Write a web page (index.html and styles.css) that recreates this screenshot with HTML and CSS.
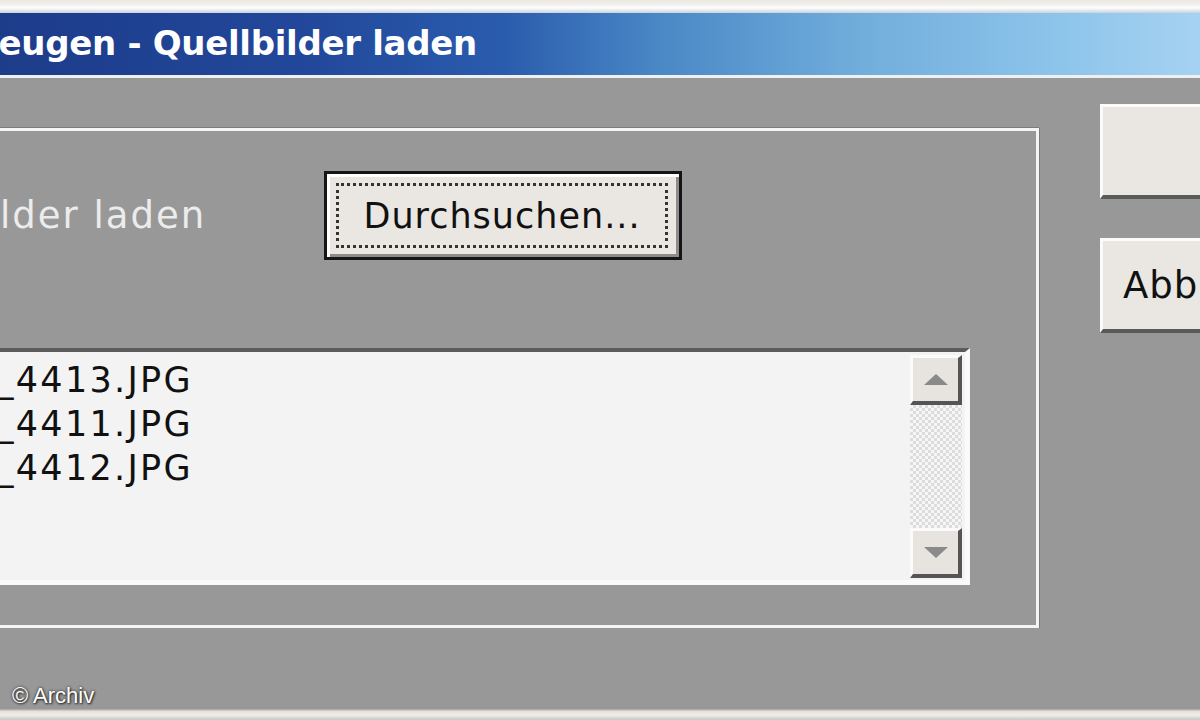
FILE: index.html
```html
<!DOCTYPE html>
<html lang="de">
<head>
  <meta charset="UTF-8">
  <title>Quellbilder laden</title>
  <link rel="stylesheet" href="styles.css">
</head>
<body>
  <div class="frame-top"></div>
  <div class="titlebar">
    <span class="title">zeugen - Quellbilder laden</span>
  </div>
  <div class="client">
    <div class="main-col">
      <div class="groupbox">
        <div class="browse-row">
          <span class="label">lder laden</span>
          <button class="btn btn-default"><span class="focus">Durchsuchen...</span></button>
        </div>
        <div class="listbox">
          <ul class="files">
            <li>_4413.JPG</li>
            <li>_4411.JPG</li>
            <li>_4412.JPG</li>
          </ul>
          <div class="scrollbar">
            <div class="scroll-btn"><span class="arrow-up"></span></div>
            <div class="scroll-track"></div>
            <div class="scroll-btn"><span class="arrow-down"></span></div>
          </div>
        </div>
      </div>
    </div>
    <div class="side-col">
      <button class="btn btn-side"></button>
      <button class="btn btn-side">Abb</button>
    </div>
  </div>
  <div class="frame-bottom"></div>
  <div class="credit">© Archiv</div>
</body>
</html>
```

FILE: styles.css
```css
body {
  margin: 0;
  width: 1200px;
  height: 720px;
  overflow: hidden;
  position: relative;
  background-color: #989898;
  font-family: "DejaVu Sans", Verdana, sans-serif;
  color: #111;
}
.frame-top {
  height: 13px;
  background: linear-gradient(#ece8e2 0, #f2f0ec 35%, #ffffff 60%, #c9d2dc 100%);
}
.titlebar {
  height: 62px;
  border-bottom: 3px solid #eef0f2;
  background: linear-gradient(to right, #1d3c8a 0, #22479a 25%, #2a5cad 42%, #4a88c6 55%, #72aedc 72%, #8cc4ea 88%, #a6d2f2 100%);
  overflow: hidden;
  white-space: nowrap;
}
.title {
  display: inline-block;
  margin-left: -21px;
  line-height: 60px;
  font-size: 34px;
  font-weight: bold;
  color: #fff;
  letter-spacing: -0.3px;
}
.client {
  display: flex;
  height: 630px;
}
.main-col {
  padding-top: 50px;
  margin-left: -20px;
}
.groupbox {
  width: 1059px;
  box-sizing: border-box;
  border: 3px solid #f4f4f4;
  box-shadow: 0 -1px 0 #7c7c7c, 1px 0 0 #7c7c7c;
  padding: 40px 66px 40px 17px;
}
.browse-row {
  display: flex;
  align-items: center;
}
.label {
  flex: 0 0 324px;
  font-size: 37px;
  letter-spacing: 2px;
  color: #ececec;
}
.btn {
  font-family: inherit;
  color: #111;
  background-color: #eae6e2;
  padding: 0;
  cursor: pointer;
}
.btn-default {
  width: 358px;
  height: 89px;
  border: 3px solid #151515;
  box-shadow: inset 3px 3px 0 #fff, inset -3px -3px 0 #8c8c8c;
  padding: 9px 11px 9px 9px;
}
.focus {
  display: flex;
  align-items: center;
  justify-content: center;
  height: 100%;
  border: 3px dotted #333;
  box-sizing: border-box;
  font-size: 35px;
  letter-spacing: 1px;
}
.listbox {
  display: flex;
  margin-top: 88px;
  height: 237px;
  box-sizing: border-box;
  border-top: 4px solid #5c5c5c;
  border-right: 5px solid #fafafa;
  border-bottom: 5px solid #fafafa;
  background-color: #f3f3f3;
  padding: 3px 3px 2px 0;
}
.files {
  flex: 1;
  list-style: none;
  margin: 0 0 0 -4px;
  padding: 3px 0 0 0;
  font-size: 35px;
  line-height: 44px;
  letter-spacing: 2.3px;
}
.scrollbar {
  width: 52px;
  display: flex;
  flex-direction: column;
}
.scroll-btn {
  height: 50px;
  box-sizing: border-box;
  background-color: #e7e4e0;
  border-top: 3px solid #fbfbfb;
  border-left: 3px solid #fbfbfb;
  border-right: 4px solid #555;
  border-bottom: 4px solid #555;
  display: flex;
  align-items: center;
  justify-content: center;
}
.scroll-track {
  flex: 1;
  background: repeating-conic-gradient(#dcdcdc 0 25%, #f6f6f6 0 50%) 0 0 / 6px 6px;
}
.arrow-up {
  border-left: 12px solid transparent;
  border-right: 12px solid transparent;
  border-bottom: 11px solid #8a8a8a;
}
.arrow-down {
  border-left: 12px solid transparent;
  border-right: 12px solid transparent;
  border-top: 11px solid #8a8a8a;
}
.side-col {
  display: flex;
  flex-direction: column;
  gap: 39px;
  padding-top: 26px;
  margin-left: 61px;
}
.btn-side {
  width: 100px;
  height: 95px;
  border-top: 3px solid #fbfbfb;
  border-left: 3px solid #fbfbfb;
  border-right: none;
  border-bottom: 4px solid #5a5a5a;
  padding-left: 20px;
  text-align: left;
  font-size: 37px;
  letter-spacing: 1px;
}
.frame-bottom {
  height: 12px;
  background: linear-gradient(#8a8a8a 0, #e8e4df 30%, #f0ede9 60%, #c8c8c8 100%);
}
.credit {
  position: absolute;
  left: 12px;
  bottom: 11px;
  font-family: "Liberation Sans", Arial, sans-serif;
  font-size: 22px;
  color: #fff;
  text-shadow: 0 0 3px #222, 1px 1px 2px #333;
}
```
